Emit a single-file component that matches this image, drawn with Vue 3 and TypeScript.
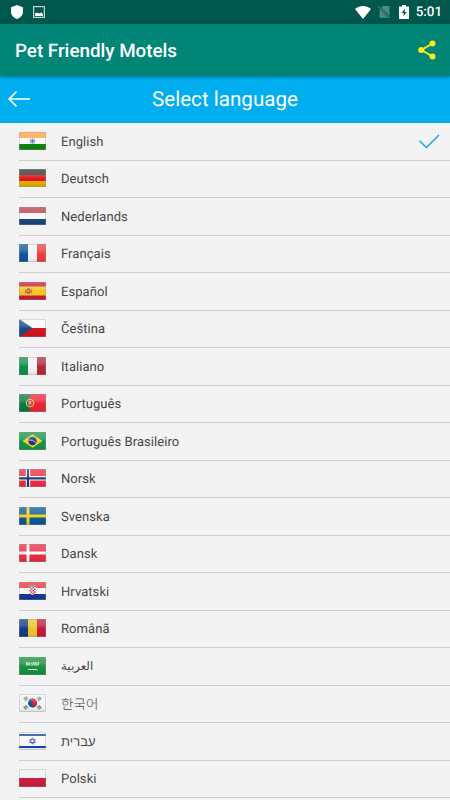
<script setup lang="ts">
interface Language {
  code: string
  name: string
  dir?: 'h' | 'v'
  stripes: string[]
}

const languages: Language[] = [
  { code: 'in', name: 'English', stripes: ['#ff9f45', '#fafafa', '#118512'] },
  { code: 'de', name: 'Deutsch', stripes: ['#333333', '#e3141c', '#dfb000'] },
  { code: 'nl', name: 'Nederlands', stripes: ['#bd3b4c', '#fafafa', '#1b4581'] },
  { code: 'fr', name: 'Français', dir: 'v', stripes: ['#0f559b', '#f2f2f2', '#ef3d3a'] },
  { code: 'es', name: 'Español', stripes: ['#c8193a', '#f4c51e', '#f4c51e', '#c8193a'] },
  { code: 'cz', name: 'Čeština', stripes: ['#f8f8f8', '#d3141c'] },
  { code: 'it', name: 'Italiano', dir: 'v', stripes: ['#0b8f48', '#f2f2f2', '#b42636'] },
  { code: 'pt', name: 'Português', dir: 'v', stripes: ['#0e7648', '#0e7648', '#ee2338', '#ee2338', '#ee2338'] },
  { code: 'br', name: 'Português Brasileiro', stripes: ['#14934a'] },
  { code: 'no', name: 'Norsk', stripes: ['#e72d40'] },
  { code: 'se', name: 'Svenska', stripes: ['#0b5893'] },
  { code: 'dk', name: 'Dansk', stripes: ['#e72d40'] },
  { code: 'hr', name: 'Hrvatski', stripes: ['#ea3237', '#f8f8f8', '#123a93'] },
  { code: 'ro', name: 'Românã', dir: 'v', stripes: ['#153b86', '#eec22b', '#c6173a'] },
  { code: 'sa', name: 'العربية', stripes: ['#16903c'] },
  { code: 'kr', name: '한국어', stripes: ['#f3f3f3'] },
  { code: 'il', name: 'עברית', stripes: ['#f8f8f8'] },
  { code: 'pl', name: 'Polski', stripes: ['#f1f1f1', '#c91d40'] },
]

const selected = 'in'

// Each band runs to the far edge, so neighbours overlap and leave no seams.
function band(lang: Language, i: number) {
  const n = lang.stripes.length
  const x = (27 / n) * i
  const y = (18 / n) * i
  return lang.dir === 'v'
    ? { x, y: 0, width: 27 - x, height: 18 }
    : { x: 0, y, width: 27, height: 18 - y }
}
</script>

<template>
  <div class="screen">
    <header class="status">
      <div class="status-left">
        <svg class="shield" width="12" height="14" viewBox="0 0 12 14"><path d="M6 0 12 2.2V7c0 3.3-2.600 5.800-6 7C2.600 12.800 0 10.300 0 7V2.200Z" fill="#fff" /></svg>
        <svg width="12" height="12" viewBox="0 0 12 12">
          <rect x=".6" y=".6" width="10.800" height="10.800" fill="none" stroke="#c3d5d2" stroke-width="1.200" />
          <path d="M2 10V7.500L4 6.500l2 1L8.500 6.500 10 8v2Z" fill="#fff" />
        </svg>
      </div>
      <div class="status-right">
        <svg class="wifi" width="16" height="13" viewBox="0 0 16 13"><path d="M0 3C4.500-1 11.500-1 16 3L8 13Z" fill="#fff" /></svg>
        <svg class="sim" width="13" height="14" viewBox="0 0 13 14">
          <path d="M5 1H11.500V10.800L3.300 2.700ZM1.500 3.800 10.200 12.700H1.500Z" fill="#4d8a80" />
          <path d="M.5 1.500 12 13" stroke="#6c9f97" stroke-width=".9" />
        </svg>
        <svg class="battery" width="10" height="14" viewBox="0 0 10 14">
          <path d="M3 0h4v1.500h3V14H0V1.500h3Z" fill="#fff" />
          <path d="M6 3.500 2.500 8h2.300L4.300 11.500 7.700 7H5.500Z" fill="#00574b" />
        </svg>
        <span class="clock">5:01</span>
      </div>
    </header>

    <div class="appbar">
      <h1>Pet Friendly Motels</h1>
      <svg width="18" height="20" viewBox="0 0 18 20">
        <path d="M14.500 3.500 3.500 10l11 6.500" fill="none" stroke="#fcee15" stroke-width="2" />
        <g fill="#fcee15"><circle cx="14.500" cy="3.400" r="3" /><circle cx="3.200" cy="10" r="3" /><circle cx="14.500" cy="16.600" r="3" /></g>
      </svg>
    </div>

    <div class="titlebar">
      <svg class="back" width="22" height="16" viewBox="0 0 22 16"><path d="M8.500.6 1 8l7.500 7.400M1 8h21" fill="none" stroke="#fff" stroke-width="1.500" /></svg>
      <h2>Select language</h2>
    </div>

    <svg class="defs" width="0" height="0" aria-hidden="true">
      <defs>
        <linearGradient id="gloss" x1="0" y1="0" x2="0" y2="1">
          <stop offset="0" stop-color="#fff" stop-opacity=".24" />
          <stop offset=".33" stop-color="#fff" stop-opacity=".2" />
          <stop offset=".55" stop-color="#fff" stop-opacity="0" />
          <stop offset=".8" stop-color="#000" stop-opacity=".02" />
          <stop offset="1" stop-color="#000" stop-opacity=".1" />
        </linearGradient>
      </defs>
    </svg>

    <ul class="list">
      <li v-for="lang in languages" :key="lang.code" class="row">
        <svg class="flag" width="27" height="18" viewBox="0 0 27 18">
          <rect v-for="(color, i) in lang.stripes" :key="i" v-bind="band(lang, i)" :fill="color" />

          <g v-if="lang.code === 'in'" fill="none" stroke="#3b479c">
            <circle cx="13.500" cy="9" r="2.300" stroke-width=".8" stroke-opacity=".75" />
            <circle cx="13.500" cy="9" r=".7" fill="#3b479c" />
            <path d="M11.500 9h4M13.500 7v4" stroke-width=".3" />
          </g>
          <g v-else-if="lang.code === 'es'">
            <path d="M7.500 7h4v3.500q-2 2.500-4 0Z" fill="#b9533a" />
            <path d="M8 6.500h3M6.500 7.500v4M12.300 7.500v4" stroke="#a9774c" stroke-width="1" />
            <path d="M8.500 8h2v2h-2Z" fill="#d99a78" />
          </g>
          <path v-else-if="lang.code === 'cz'" d="M0 0 13.500 9 0 18Z" fill="#174a82" />
          <g v-else-if="lang.code === 'pt'">
            <circle cx="11" cy="9" r="3.700" fill="none" stroke="#d9c13d" stroke-width="1.200" />
            <path d="M9 6.500h4v3.800q-2 2.600-4 0Z" fill="#e4453c" />
            <path d="M10 7.500h2v2.800h-2Z" fill="#f2f2f2" />
            <path d="M11 7.700v2.400" stroke="#35558e" stroke-width=".7" />
          </g>
          <g v-else-if="lang.code === 'br'">
            <path d="M13.500 2.200 23.500 9l-10 6.800L3.500 9Z" fill="#f5ce23" />
            <circle cx="13.500" cy="9" r="4.200" fill="#24317e" />
            <path d="M9.600 8q4.500-.7 7.600 2.800" fill="none" stroke="#dce3ed" stroke-width=".8" />
          </g>
          <g v-else-if="lang.code === 'no'">
            <path d="M9 0v18M0 9.300h27" stroke="#fff" stroke-width="4.400" />
            <path d="M9 0v18M0 9.300h27" stroke="#17376f" stroke-width="2.300" />
          </g>
          <path v-else-if="lang.code === 'se'" d="M9 0v18M0 9h27" stroke="#f5d020" stroke-width="3" />
          <path v-else-if="lang.code === 'dk'" d="M9 0v18M0 9h27" stroke="#fff" stroke-width="2.800" />
          <g v-else-if="lang.code === 'hr'">
            <path d="M10.500 5h6v5q-.5 2.500-3 3-2.500-.5-3-3Z" fill="#fff" />
            <path d="M10.500 5h1.500v1.500h-1.500zM13.500 5H15v1.500h-1.500zM12 6.500h1.500V8H12zM15 6.500h1.500V8H15zM10.500 8H12v1.500h-1.500zM13.500 8H15v1.500h-1.500zM12 9.500h1.500V11H12zM15 9.500h1.500V11H15zM10.700 11H12v1.300zM13.500 11H15v1.500h-1.500z" fill="#dc2a30" />
            <path d="M10 4.800 10.500 3h6l.5 1.800" fill="#6f8bb5" stroke="#6f7da5" stroke-width=".5" />
          </g>
          <g v-else-if="lang.code === 'sa'" fill="none" stroke="#e6f4e9">
            <path d="M7.500 5v3h3V5.500M9 5v3M11.500 8h2.500V5M12.500 5.500v1.500M15 5v3h4.500V5M17 5v3M18.300 5.500v1M7.500 6.300h2M15.500 6.300h2" stroke-width=".8" />
            <path d="M9 12.500h8.500q1 0 1 1" stroke-width=".9" />
          </g>
          <g v-else-if="lang.code === 'kr'">
            <g transform="rotate(25 13.500 9)">
              <circle cx="13.500" cy="9" r="4.500" fill="#164b91" />
              <path d="M9 9a4.500 4.500 0 0 1 9 0A2.250 2.250 0 0 1 13.500 9 2.250 2.250 0 0 0 9 9Z" fill="#d82036" />
            </g>
            <g stroke="#333" stroke-width=".95">
              <path d="M4.600 5 7 2.600M5.600 5.900l2.400-2.400M6.600 6.800l2.400-2.400" />
              <path d="m20 2.600 2.400 2.400M19 3.500l2.400 2.400M18 4.400l2.400 2.400" />
              <path d="m4.600 13 2.400 2.400M5.600 12.100l2.400 2.400M6.600 11.200l2.400 2.400" />
              <path d="m20 15.400 2.400-2.400M19 14.500l2.400-2.400M18 13.600l2.400-2.400" />
            </g>
          </g>
          <g v-else-if="lang.code === 'il'">
            <path d="M0 3h27M0 15h27" stroke="#0f45b0" stroke-width="2.200" />
            <path d="m13.500 5.800 2.800 4.800h-5.600ZM13.500 12.200l-2.800-4.800h5.600Z" fill="none" stroke="#3e62bd" stroke-width=".9" />
          </g>

          <rect width="27" height="18" fill="url(#gloss)" />
          <rect x=".5" y=".5" width="26" height="17" fill="none" stroke="#999" stroke-opacity=".32" />
        </svg>
        <span class="name" :class="lang.code">{{ lang.name }}</span>
        <svg v-if="lang.code === selected" class="check" width="22" height="15" viewBox="0 0 22 15"><path d="m1.500 6.800 7 6.700L21 1" fill="none" stroke="#1ba4e2" stroke-width="1.500" /></svg>
      </li>
    </ul>
  </div>
</template>

<style>
body {
  overflow: hidden;
}
</style>

<style scoped>
.screen {
  display: flex;
  flex-direction: column;
  width: 450px;
  height: 800px;
  overflow: hidden;
  background: #f3f3f3;
  font-family: Roboto, "Noto Sans", "Noto Sans CJK KR", sans-serif;
  text-rendering: geometricPrecision;
}
.status {
  display: flex;
  flex: none;
  justify-content: space-between;
  align-items: center;
  height: 24px;
  padding: 0 8px 0 11px;
  background: #00574b;
  color: #fff;
}
.status-left,
.status-right {
  display: flex;
  align-items: center;
}
.status-left {
  gap: 10px;
}
.wifi {
  margin-right: 1px;
}
.sim {
  margin-left: 6px;
}
.battery {
  margin: 0 7px 0 8px;
}
.clock {
  padding-top: 2px;
  font-size: 13.4px;
  font-weight: 500;
  line-height: 22px;
}
.appbar {
  display: flex;
  flex: none;
  justify-content: space-between;
  align-items: center;
  height: 52px;
  padding: 0 13px 0 15px;
  background: #008577;
  z-index: 1;
  box-shadow: 0 1px 3px rgba(0, 0, 0, 0.4);
}
h1,
h2 {
  margin: 0;
  color: #fff;
}
h1 {
  padding-top: 2px;
  font-size: 18.8px;
  font-weight: 500;
}
.appbar svg {
  margin-right: 1px;
}
.titlebar {
  display: grid;
  flex: none;
  grid-template-columns: 22px 1fr 22px;
  align-items: center;
  height: 47px;
  padding: 0 8px;
  background: #00aeef;
}
.back {
  margin-top: -1px;
}
h2 {
  font-size: 20.6px;
  font-weight: 400;
  text-align: center;
}
.list {
  margin: 0;
  padding: 0 0 0 19px;
  list-style: none;
}
.row {
  display: flex;
  align-items: center;
  box-sizing: border-box;
  height: 37.5px;
  padding-right: 10px;
  border-bottom: 1px solid #cecece;
}
.flag {
  flex: none;
  margin-bottom: 0.6px;
  border-radius: 1px;
}
.name {
  flex: 1;
  margin: 2.7px 0 0 15px;
  color: #484848;
  font-size: 13px;
  line-height: 18px;
  letter-spacing: 0.06px;
}
.name.sa {
  margin-top: 0;
  font-size: 11.8px;
  letter-spacing: 0;
}
.name.kr {
  font-size: 13.5px;
  font-weight: 300;
}
</style>
